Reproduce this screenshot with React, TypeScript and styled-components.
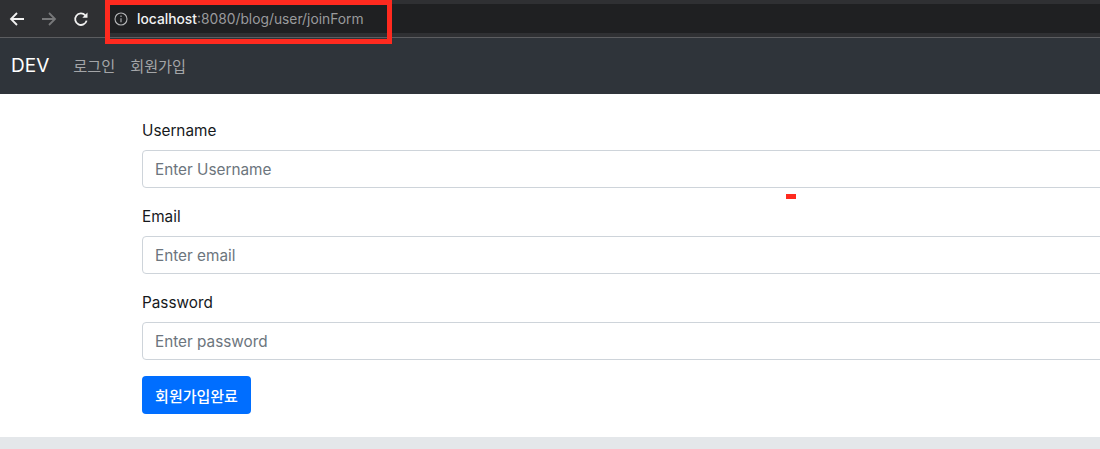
import React from "react";
import styled, { createGlobalStyle } from "styled-components";

const GlobalStyle = createGlobalStyle`
  html, body {
    margin: 0;
    padding: 0;
    background: #fff;
  }
  * {
    box-sizing: border-box;
  }
`;

const Page = styled.div`
  position: relative;
  width: 1100px;
  height: 449px;
  overflow: hidden;
  display: flex;
  flex-direction: column;
  font-family: Inter, "Noto Sans CJK KR", sans-serif;
  font-size: 15.3px;
  color: #212529;
`;

const BrowserBar = styled.div`
  height: 38px;
  flex: none;
  display: flex;
  align-items: flex-start;
  background: #2f3033;
  border-bottom: 1px solid #5c5d60;
`;

const NavButtons = styled.div`
  width: 105px;
  height: 37px;
  flex: none;
  display: flex;
  align-items: center;
  gap: 16px;
  padding: 1px 0 0 9px;
`;

const AddressBar = styled.div`
  flex: 1;
  height: 29px;
  margin-top: 4px;
  display: flex;
  align-items: center;
  gap: 9px;
  padding-left: 9px;
  background: #1f2022;
  font-size: 13.8px;
  color: #9a9b9d;
`;

const Host = styled.span`
  color: #f2f2f2;
  font-weight: 500;
`;

const NavBar = styled.nav`
  height: 56px;
  flex: none;
  display: flex;
  align-items: center;
  padding: 0 11px 2px;
  background: #2f343a;
`;

const Brand = styled.div`
  font-size: 19px;
  color: #fff;
  margin-right: 24px;
`;

const NavLink = styled.div`
  font-size: 15.2px;
  color: #a3a5a8;
  margin-right: 15px;
`;

const Main = styled.main`
  flex: 1;
  padding: 24px 0 0 142px;
`;

const Form = styled.form`
  width: 1100px;
`;

const Field = styled.div`
  display: flex;
  flex-direction: column;
  margin-bottom: 16px;
`;

const Label = styled.label`
  line-height: 24px;
  padding-top: 1px;
  margin-bottom: 7px;
  color: #16191c;
`;

const Input = styled.input`
  height: 38px;
  padding: 0 12px;
  font: inherit;
  color: #495057;
  background: #fff;
  border: 1px solid #ced4da;
  border-radius: 4px;

  &::placeholder {
    color: #6c757d;
    opacity: 1;
  }
`;

const Submit = styled.button`
  display: block;
  width: 109px;
  height: 38px;
  padding: 0;
  font: inherit;
  font-size: 15px;
  font-weight: 500;
  color: #fff;
  background: #006eff;
  border: 0;
  border-radius: 4px;
`;

const Footer = styled.div`
  height: 12px;
  flex: none;
  background: #e4e7ea;
`;

const Highlight = styled.div`
  position: absolute;
  left: 105px;
  top: 0;
  width: 287px;
  height: 44px;
  border: 5px solid #ff2a1f;
`;

const RedMark = styled.div`
  position: absolute;
  left: 786px;
  top: 194px;
  width: 10px;
  height: 5px;
  background: #ff2a1f;
`;

function ArrowIcon({ dir, color }: { dir: "left" | "right"; color: string }) {
  return (
    <svg width="16" height="16" viewBox="0 0 16 16" fill="none" stroke={color} strokeWidth="1.8">
      {dir === "left" ? <path d="M15 8H2M8 2 2 8l6 6" /> : <path d="M1 8h13M8 2l6 6-6 6" />}
    </svg>
  );
}

function ReloadIcon() {
  return (
    <svg width="16" height="16" viewBox="0 0 16 16" fill="none">
      <path d="M13.6 9.6a5.8 5.8 0 1 1-1.3-5.3" stroke="#f2f2f2" strokeWidth="1.8" />
      <path d="M14.5 1.5v5.2H9.3z" fill="#f2f2f2" />
    </svg>
  );
}

function InfoIcon() {
  return (
    <svg width="14" height="14" viewBox="0 0 14 14" fill="none" stroke="#b5b6b8" strokeWidth="1.1">
      <circle cx="7" cy="7" r="6" />
      <path d="M7 6.2v4M7 3.6v1.3" />
    </svg>
  );
}

export default function App() {
  return (
    <Page>
      <GlobalStyle />
      <BrowserBar>
        <NavButtons>
          <ArrowIcon dir="left" color="#f2f2f2" />
          <ArrowIcon dir="right" color="#77787a" />
          <ReloadIcon />
        </NavButtons>
        <AddressBar>
          <InfoIcon />
          <span>
            <Host>localhost</Host>:8080/blog/user/joinForm
          </span>
        </AddressBar>
      </BrowserBar>
      <NavBar>
        <Brand>DEV</Brand>
        <NavLink>로그인</NavLink>
        <NavLink>회원가입</NavLink>
      </NavBar>
      <Main>
        <Form>
          <Field>
            <Label>Username</Label>
            <Input placeholder="Enter Username" />
          </Field>
          <Field>
            <Label>Email</Label>
            <Input placeholder="Enter email" />
          </Field>
          <Field>
            <Label>Password</Label>
            <Input placeholder="Enter password" />
          </Field>
          <Submit type="button">회원가입완료</Submit>
        </Form>
      </Main>
      <Footer />
      <Highlight />
      <RedMark />
    </Page>
  );
}
